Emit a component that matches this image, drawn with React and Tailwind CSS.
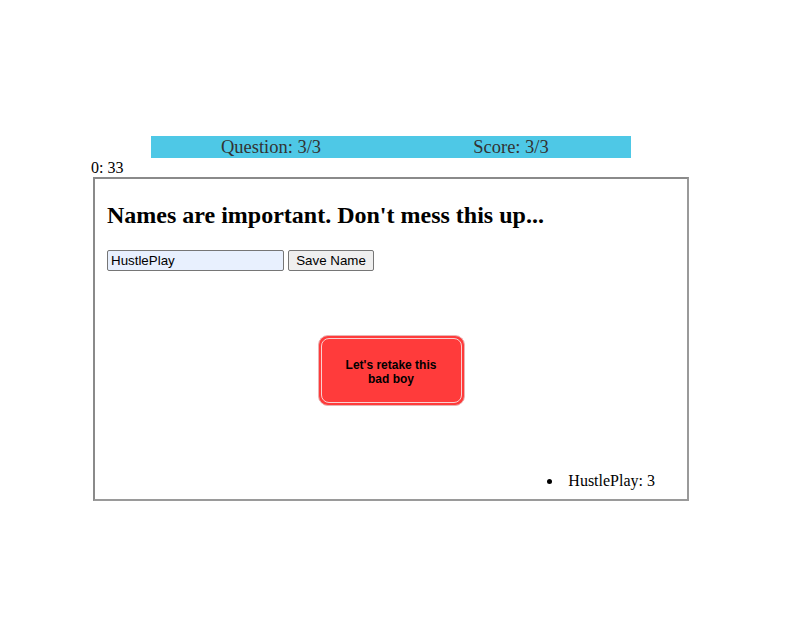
export default function App() {
  return (
    <div className="w-[789px] h-[624px] bg-white font-['Liberation_Serif',serif] text-black">
      <div className="h-[136px]" />
      <div className="ml-[151px] w-[480px] h-[22px] bg-[#4ec8e6] flex text-[18.5px] leading-[22px] text-[#333]">
        <div className="flex-1 text-center">Question: 3/3</div>
        <div className="flex-1 text-center">Score: 3/3</div>
      </div>
      <div className="ml-[91px] text-[16px] leading-[19px]">0: 33</div>
      <div className="ml-[93px] w-[596px] h-[324px] border-2 border-t-[#8a8a8a] border-l-[#8a8a8a] border-r-[#9a9a9a] border-b-[#9a9a9a] flex flex-col px-[12px]">
        <h2 className="mt-[22px] text-[24px] leading-[28px] font-bold">Names are important. Don't mess this up...</h2>
        <div className="mt-[21px] flex items-center gap-[4px] font-['Liberation_Sans',sans-serif] text-[13.33px]">
          <input
            defaultValue="HustlePlay"
            className="w-[177px] h-[21px] bg-[#e8f0fe] border border-[#767676] rounded-[2px] px-[3px] text-black outline-none"
          />
          <button className="w-[86px] h-[21px] bg-[#efefef] border border-[#767676] rounded-[2px] text-black">Save Name</button>
        </div>
        <div className="mt-[64px] flex justify-center">
          <button className="w-[147px] h-[71px] rounded-[10px] bg-[#ff3b3b] border border-[#e8b4b4] p-[2px]">
            <div className="w-full h-full rounded-[8px] border border-[#f8d0d0] flex items-center justify-center pt-[3px] font-['Liberation_Sans',sans-serif] font-bold text-[12px] leading-[14px] text-black text-center px-[20px]">
              Let's retake this bad boy
            </div>
          </button>
        </div>
        <div className="mt-auto mb-[9px] flex justify-end pr-[20px] text-[16px] leading-[18px]">
          <div className="flex items-center">
            <span className="w-[5px] h-[5px] rounded-full bg-black mr-[16px] mt-[1px]" />
            <span>HustlePlay: 3</span>
          </div>
        </div>
      </div>
    </div>
  );
}
